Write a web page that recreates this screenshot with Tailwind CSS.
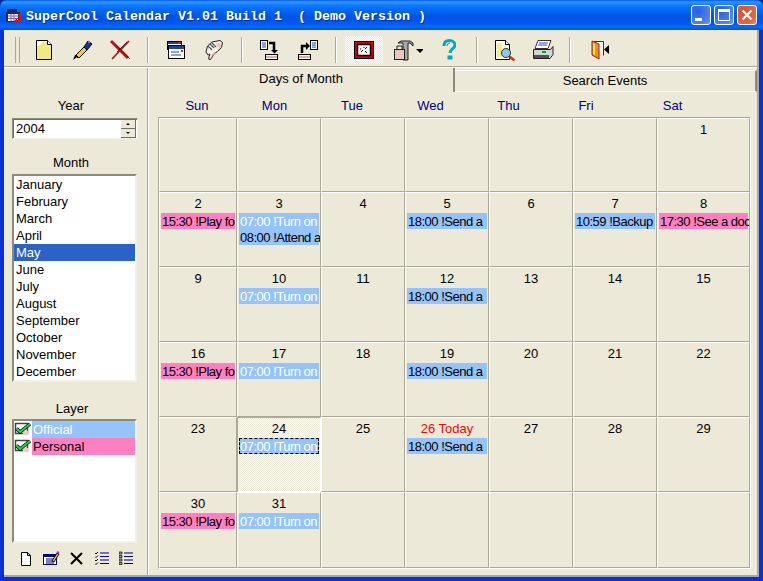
<!DOCTYPE html>
<html lang="en">
<head>
<meta charset="UTF-8">
<title>SuperCool Calendar</title>
<script src="https://cdn.jsdelivr.net/npm/@tailwindcss/browser@4"></script>
</head>
<body class="bg-[#0a2a9a]">
<div class="w-[763px] h-[581px] flex flex-col overflow-hidden rounded-t-[7px] bg-[#0831d9] font-['Liberation_Sans',Arial,sans-serif] text-[13px] leading-[16px] text-black">

	<!-- title bar -->
	<div class="h-[30px] shrink-0 flex items-center pl-[6px] pr-[6px] pt-[3px] bg-[linear-gradient(180deg,#0058ee_0%,#3593ff_6%,#288eff_10%,#127dff_16%,#036ffc_28%,#0262ee_40%,#0054e3_56%,#0055eb_70%,#005bf5_80%,#026afe_88%,#0062ef_94%,#0052d6_100%)]">
		<svg width="17" height="17" viewBox="0 0 17 17" class="shrink-0">
			<rect x="1" y="1" width="10" height="4" fill="#0a246a"/>
			<rect x="0" y="4" width="14" height="10" fill="#1b2a6b"/>
			<rect x="2" y="6" width="10" height="7" fill="#fff"/>
			<path d="M2 8h10M2 10.5h10M5 6v7M8 6v7" stroke="#8a5a9a" stroke-width="1"/>
			<path d="M14 7v6h-4" stroke="#e01010" stroke-width="2" fill="none"/>
			<path d="M11 10l-3 3 3 3zM12 7l2-3 2 3z" fill="#e01010"/>
		</svg>
		<span class="ml-[3px] font-['Liberation_Mono',monospace] font-bold text-[13.33px] text-white whitespace-pre [text-shadow:1px_1px_0_#0a2a9a]">SuperCool Calendar V1.01 Build 1  ( Demo Version )</span>
		<div class="ml-auto flex gap-[3px] -mt-[3px]">
			<div class="w-[20px] h-[20px] rounded-[3px] border border-white bg-[radial-gradient(circle_at_30%_30%,#2a5fe0,#4f82ee_70%,#6f9cf5)] flex items-end pl-[3px] pb-[3px]"><div class="w-[7px] h-[3px] bg-white"></div></div>
			<div class="w-[20px] h-[20px] rounded-[3px] border border-white bg-[radial-gradient(circle_at_30%_30%,#2a5fe0,#4f82ee_70%,#6f9cf5)] flex items-center justify-center"><div class="w-[12px] h-[12px] border border-white border-t-[3px]"></div></div>
			<div class="w-[20px] h-[20px] rounded-[3px] border border-white bg-[radial-gradient(circle_at_30%_30%,#d8512c,#e2683f_70%,#ee8c6c)] flex items-center justify-center">
				<svg width="12" height="12" viewBox="0 0 12 12"><path d="M1.5 1.5l9 9M10.5 1.5l-9 9" stroke="#fff" stroke-width="2.2"/></svg>
			</div>
		</div>
	</div>

	<div class="flex-1 mx-[4px] mb-[4px] flex flex-col bg-[#ece9d8] border-r-2 border-b-2 border-r-[#aca899] border-b-[#aca899] min-h-0">

		<!-- toolbar -->
		<div class="h-[37px] shrink-0 flex items-center pl-[11px] pt-[3px] border-b border-b-[#aca899]">
			<div class="w-[5px] h-[26px] border-x border-x-[#aca899] mr-[5px]"></div>

			<div class="w-[38px] h-[30px] flex items-center justify-center">
				<svg width="24" height="24" viewBox="0 0 24 24"><path d="M4.500 2.500h11l4 4v15h-15z" fill="#fff" stroke="#000"/><path d="M5 9l6-5h4v3h4v14H5z" fill="#f0ea80"/><path d="M15.500 2.500v4h4" fill="#fff" stroke="#000"/></svg>
			</div>
			<div class="w-[38px] h-[30px] flex items-center justify-center">
				<svg width="24" height="24" viewBox="0 0 24 24"><path d="M3 22l2-5 2 2z" fill="#000"/><path d="M5 17l3 3" stroke="#000"/><path d="M6 17l8-8 3 3-8 8z" fill="#f2d020" stroke="#000"/><path d="M14 9l4-6 4 3-5 6z" fill="#1f2fa0" stroke="#000"/><rect x="18" y="3" width="2" height="2" fill="#6080f0"/></svg>
			</div>
			<div class="w-[38px] h-[30px] flex items-center justify-center">
				<svg width="24" height="24" viewBox="0 0 24 24"><path d="M3 3l17 17" stroke="#b01818" stroke-width="3"/><path d="M8 7l14 14" stroke="#202020" stroke-width="0.800"/><path d="M21 3L4 21" stroke="#b01818" stroke-width="1.800"/><path d="M19 4L9 14" stroke="#101010" stroke-width="0.800"/></svg>
			</div>

			<div class="w-[2px] h-[26px] bg-[#aca899] mx-[8px] border-r border-r-[#fff]"></div>

			<div class="w-[38px] h-[30px] flex items-center justify-center">
				<svg width="24" height="24" viewBox="0 0 24 24"><rect x="3.500" y="3.500" width="14" height="8" fill="#fff" stroke="#000"/><rect x="4" y="4" width="13" height="2" fill="#1f3fb0"/><rect x="14" y="4" width="3" height="2" fill="#d02020"/><rect x="4.500" y="7.500" width="16" height="13" fill="#fff" stroke="#000"/><rect x="5" y="8" width="15" height="3" fill="#1f3fb0"/><rect x="17" y="12" width="2" height="2" fill="#d02020"/><path d="M7 14h8M7 17h10" stroke="#1f3fb0"/></svg>
			</div>
			<div class="w-[38px] h-[30px] flex items-center justify-center">
				<svg width="24" height="24" viewBox="0 0 24 24"><path d="M10 4l8-1.500 2.500 2-1 5-4 4-3 2-4 6-2-0.500 1.500-5-2 1-2-3 1.500-6z" fill="#f4f0ec" stroke="#222"/><path d="M6 8l4 4M8 6l4 4M10 5l4 4" stroke="#555" stroke-width="1.200"/><path d="M14 5l5 0 0 4-3 3z" fill="#f0c8c0"/><path d="M10 18l3-3" stroke="#d88" stroke-width="1.500"/></svg>
			</div>

			<div class="w-[2px] h-[26px] bg-[#aca899] mx-[8px] border-r border-r-[#fff]"></div>

			<div class="w-[38px] h-[30px] flex items-center justify-center">
				<svg width="24" height="24" viewBox="0 0 24 24"><rect x="2.500" y="2.500" width="7" height="9" fill="#fff" stroke="#000"/><path d="M4 5h4M4 7h4M4 9h4" stroke="#1f3fb0"/><path d="M11 5h5v7" stroke="#000" stroke-width="2.500" fill="none"/><path d="M13 12h7l-3.500 3.500z" fill="#000"/><rect x="7.500" y="16.500" width="12" height="5" fill="#fff" stroke="#000"/><rect x="8" y="18" width="11" height="2" fill="#e8a8a8"/></svg>
			</div>
			<div class="w-[38px] h-[30px] flex items-center justify-center">
				<svg width="24" height="24" viewBox="0 0 24 24"><rect x="14.500" y="2.500" width="7" height="9" fill="#fff" stroke="#000"/><path d="M16 5h4M16 7h4M16 9h4" stroke="#1f3fb0"/><path d="M6 15V8h5" stroke="#000" stroke-width="2.500" fill="none"/><path d="M10 4v8l4-4z" fill="#000"/><rect x="2.500" y="16.500" width="12" height="5" fill="#fff" stroke="#000"/><rect x="3" y="18" width="11" height="2" fill="#e8a8a8"/></svg>
			</div>

			<div class="w-[2px] h-[26px] bg-[#aca899] mx-[8px] border-r border-r-[#fff]"></div>

			<!-- pressed view button -->
			<div class="w-[38px] h-[28px] flex items-center justify-center bg-[repeating-conic-gradient(#fcfbf8_0_25%,#ece9d8_0_50%)] bg-[length:2px_2px]">
				<svg width="20" height="18" viewBox="0 0 20 18"><rect x="0.500" y="0.500" width="19" height="17" fill="#e00000" stroke="#000"/><rect x="3.500" y="3.500" width="13" height="11" fill="#fff" stroke="#000" stroke-width="1.500"/><path d="M13 6l-2 2M9 9l-2 2M11 10l2 2M10 6v1M6 8h1" stroke="#000"/></svg>
			</div>
			<div class="w-[47px] h-[30px] flex items-center pl-[10px]">
				<svg width="30" height="24" viewBox="0 0 30 24"><path d="M5 5l3-2h9l3 2 0 3-3-3h-2v17h-5V5H8z" fill="#a8a8a8" stroke="#222"/><rect x="1.500" y="11.500" width="10" height="10" fill="#e8c8c0" stroke="#222"/><path d="M4 11V8h5v3" fill="none" stroke="#222"/><path d="M23 11h8l-4 4z" fill="#000"/></svg>
			</div>
			<div class="w-[38px] h-[30px] flex items-center justify-center">
				<svg width="14" height="22" viewBox="0 0 14 22"><path d="M2 7C2 3 4.500 1.500 7.500 1.500S13 3.500 13 6c0 3.500-5 4-5 8" fill="none" stroke="#00a8c8" stroke-width="3"/><path d="M5 7c0-2 1-3 3-3" fill="none" stroke="#005a80" stroke-width="0.800"/><rect x="5.500" y="16.500" width="5" height="4" fill="#00a8c8"/></svg>
			</div>

			<div class="w-[2px] h-[26px] bg-[#aca899] mx-[8px] border-r border-r-[#fff]"></div>

			<div class="w-[38px] h-[30px] flex items-center justify-center">
				<svg width="24" height="24" viewBox="0 0 24 24"><path d="M2.500 2.500h10l4 4v15h-14z" fill="#fffde8" stroke="#000"/><path d="M4 5h5v14H4z" fill="#f5ee90"/><path d="M12.500 2.500v4h4" fill="#fff" stroke="#000"/><circle cx="13" cy="15" r="4.500" fill="#8ec8f0" stroke="#333"/><path d="M16.500 18.500l5 4" stroke="#d83010" stroke-width="2.500"/></svg>
			</div>
			<div class="w-[38px] h-[30px] flex items-center justify-center">
				<svg width="24" height="24" viewBox="0 0 24 24"><path d="M7 2.500h13l-3 8H4z" fill="#fff" stroke="#333"/><path d="M8 5h9M7 7h9" stroke="#2050c0"/><path d="M2.500 11.500h17l2.500-3v8l-3 4h-16.500z" fill="#d4d4d4" stroke="#222"/><rect x="3" y="17" width="15" height="3" fill="#505050"/><rect x="11" y="13" width="4" height="2" fill="#10a020"/></svg>
			</div>

			<div class="w-[2px] h-[26px] bg-[#aca899] ml-[7px] mr-[10px] border-r border-r-[#fff]"></div>

			<div class="w-[38px] h-[30px] flex items-center justify-center">
				<svg width="24" height="24" viewBox="0 0 24 24"><path d="M4.500 3.500h11v14" fill="#fff" stroke="#333"/><path d="M4 3l7 3v15l-7-4z" fill="#f09020" stroke="#a02010"/><path d="M5 5l2 1v11l-2-1z" fill="#ffe060"/><path d="M16 11.500l5-4.500v9z" fill="#000"/></svg>
			</div>
		</div>

		<div class="flex-1 flex min-h-0 border-t border-t-white">
			<!-- left pane -->
			<div class="w-[144px] shrink-0 border-r border-r-[#aca899] flex flex-col items-start pl-[8px] pt-[30px]">
				<div class="w-[118px] text-center">Year</div>
				<div class="w-[126px] h-[21px] mt-[4px] flex bg-white border border-[#8e8b78] border-r-[#f4f2e8] border-b-[#f4f2e8] shadow-[inset_1px_1px_0_#716f64]">
					<div class="flex-1 pl-[3px] pt-[2px]">2004</div>
					<div class="w-[15px] flex flex-col mr-[1px] mt-[1px] text-[0px]">
						<div class="h-[9px] bg-[#ece9d8] border-b border-r border-[#716f64] flex items-center justify-center"><div class="w-0 h-0 border-x-[2px] border-x-transparent border-b-[2px] border-b-black"></div></div>
						<div class="h-[9px] bg-[#ece9d8] border-b border-r border-[#716f64] flex items-center justify-center"><div class="w-0 h-0 border-x-[2px] border-x-transparent border-t-[2px] border-t-black"></div></div>
					</div>
				</div>

				<div class="w-[118px] text-center mt-[16px]">Month</div>
				<div class="w-[125px] h-[208px] mt-[3px] bg-white border-2 border-[#8e8b78] border-r-[#f4f2e8] border-b-[#f4f2e8] leading-[18px]">
					<div class="h-[17px] pl-[2px]">January</div>
					<div class="h-[17px] pl-[2px]">February</div>
					<div class="h-[17px] pl-[2px]">March</div>
					<div class="h-[17px] pl-[2px]">April</div>
					<div class="h-[17px] pl-[2px] bg-[#2a62c8] text-white">May</div>
					<div class="h-[17px] pl-[2px]">June</div>
					<div class="h-[17px] pl-[2px]">July</div>
					<div class="h-[17px] pl-[2px]">August</div>
					<div class="h-[17px] pl-[2px]">September</div>
					<div class="h-[17px] pl-[2px]">October</div>
					<div class="h-[17px] pl-[2px]">November</div>
					<div class="h-[17px] pl-[2px]">December</div>
				</div>

				<div class="w-[120px] text-center mt-[19px]">Layer</div>
				<div class="w-[125px] h-[124px] mt-[2px] bg-white border-2 border-[#8e8b78] border-r-[#f4f2e8] border-b-[#f4f2e8] leading-[18px]">
					<div class="h-[17px] flex">
						<svg width="18" height="17" viewBox="0 0 18 17" class="shrink-0"><rect x="1.500" y="2.500" width="12" height="10" fill="#fff" stroke="#444" stroke-width="1.500"/><rect x="9" y="10" width="5" height="4" fill="#f4c8c0"/><path d="M2.500 7.500l3.500 3.500 10-8" fill="none" stroke="#000" stroke-width="3.500"/><path d="M2.500 7.500l3.500 3.500 10-8" fill="none" stroke="#18e040" stroke-width="2"/></svg>
						<div class="flex-1 bg-[#94c4fb] text-white pl-[1px]">Official</div>
					</div>
					<div class="h-[17px] flex">
						<svg width="18" height="17" viewBox="0 0 18 17" class="shrink-0"><rect x="1.500" y="2.500" width="12" height="10" fill="#fff" stroke="#444" stroke-width="1.500"/><rect x="9" y="10" width="5" height="4" fill="#f4c8c0"/><path d="M2.500 7.500l3.500 3.500 10-8" fill="none" stroke="#000" stroke-width="3.500"/><path d="M2.500 7.500l3.500 3.500 10-8" fill="none" stroke="#18e040" stroke-width="2"/></svg>
						<div class="flex-1 bg-[#ff80c0] pl-[1px]">Personal</div>
					</div>
				</div>

				<div class="flex w-[125px] mt-[7px] items-center pl-[6px] gap-[9px]">
					<svg width="16" height="16" viewBox="0 0 16 16"><path d="M3.500 2.500h6l3 3v10h-9z" fill="#fff" stroke="#000"/><path d="M9.500 2.500v3h3" fill="none" stroke="#000"/></svg>
					<svg width="17" height="16" viewBox="0 0 17 16"><rect x="0.500" y="4.500" width="13" height="10" fill="#fff" stroke="#000080"/><rect x="1" y="5" width="12" height="2" fill="#000080"/><path d="M3 9h8M3 11h8M3 13h8" stroke="#000080"/><path d="M9 11l5-8 2 1-5 8z" fill="#f0d020" stroke="#000"/><path d="M14 2l2 1" stroke="#c020c0" stroke-width="2"/></svg>
					<svg width="15" height="16" viewBox="0 0 15 16"><path d="M2 3l11 11M13 3L2 14" stroke="#000" stroke-width="2"/></svg>
					<svg width="14" height="16" viewBox="0 0 14 16" class="ml-[2px]"><path d="M5 3h9M5 6.500h9M5 10h9M5 13.500h9" stroke="#000080" stroke-width="1.200"/><path d="M0 3l1 1 2-2M0 6.500l1 1 2-2M0 10l1 1 2-2M0 13.500l1 1 2-2" fill="none" stroke="#000"/></svg>
					<svg width="14" height="16" viewBox="0 0 14 16" class="ml-[1px]"><path d="M5 3h9M5 6.500h9M5 10h9M5 13.500h9" stroke="#000080" stroke-width="1.200"/><path d="M0 2h3v2H0zM0 5.500h3v2H0zM0 9h3v2H0zM0 12.500h3v2H0z" fill="#aaa" stroke="#000" stroke-width="0.700"/></svg>
				</div>
			</div>

			<!-- right pane -->
			<div class="flex-1 flex flex-col min-w-0 border-l border-l-white">
				<div class="h-[24px] shrink-0 flex items-stretch">
					<div class="w-[306px] flex items-center justify-center pb-[2px] border-r-2 border-r-[#8e8b78]">Days of Month</div>
					<div class="flex-1 mt-[2px] flex items-center justify-center border-t border-t-white border-b border-b-white border-r-2 border-r-[#8e8b78]">Search Events</div>
				</div>
				<div class="grid grid-cols-[78px_77px_78px_79px_77px_78px_95px] ml-[9px] w-[593px] mt-[6px] h-[17px] text-[#000080] text-center">
					<div>Sun</div><div>Mon</div><div>Tue</div><div>Wed</div><div>Thu</div><div>Fri</div><div>Sat</div>
				</div>
				<div id="cal" class="grid grid-cols-[78px_84px_84px_84px_84px_84px_93px] grid-rows-[74px_75px_75px_75px_75px_76px] ml-[9px] mt-[2px] w-[593px] border border-t-[#aca899] border-l-[#aca899] border-r-white border-b-white"></div>
			</div>
		</div>
	</div>
</div>

<script>
const events = {
	2: [['15:30 !Play fo', 'pink']],
	3: [['07:00 !Turn on', 'blue'], ['08:00 !Attend a', 'dark']],
	5: [['18:00 !Send a', 'dark']],
	7: [['10:59 !Backup', 'dark']],
	8: [['17:30 !See a doc', 'pink']],
	10: [['07:00 !Turn on', 'blue']],
	12: [['18:00 !Send a', 'dark']],
	16: [['15:30 !Play fo', 'pink']],
	17: [['07:00 !Turn on', 'blue']],
	19: [['18:00 !Send a', 'dark']],
	24: [['07:00 !Turn on', 'focus']],
	26: [['18:00 !Send a', 'dark']],
	30: [['15:30 !Play fo', 'pink']],
	31: [['07:00 !Turn on', 'blue']],
};
const barClass = {
	pink: 'bg-[#ff80c0] text-black',
	blue: 'bg-[#94c4fb] text-white',
	dark: 'bg-[#94c4fb] text-black',
	focus: 'bg-[#94c4fb] text-white outline-1 -outline-offset-1 outline-dashed outline-black',
};

const cal = document.getElementById('cal');
for (let i = 0; i < 42; i++) {
	const day = i - 5;
	const cell = document.createElement('div');
	cell.className = 'border-t border-l border-t-white border-l-white border-b border-r border-b-[#aca899] border-r-[#aca899] overflow-hidden min-w-0';
	if (day == 24) cell.className = 'border border-[#aca899] border-r-white border-b-white overflow-hidden min-w-0 bg-[repeating-conic-gradient(#fcfbf8_0_25%,#ece9d8_0_50%)] bg-[length:2px_2px]';
	if (day >= 1 && day <= 31) {
		let html = '<div class="h-[20px] pt-[3px] text-center whitespace-nowrap">' + day + '</div>';
		if (day == 26) html = '<div class="h-[20px] pt-[3px] text-center whitespace-nowrap text-[#ff0000]">26 Today</div>';
		(events[day] || []).forEach(ev => {
			html += '<div class="h-[16px] ml-[1px] mr-[1px] whitespace-nowrap pl-[1px] leading-[17px] tracking-[-0.5px] ' + barClass[ev[1]] + '">' + ev[0] + '</div>';
		});
		cell.innerHTML = html;
	}
	cal.appendChild(cell);
}
</script>
</body>
</html>
